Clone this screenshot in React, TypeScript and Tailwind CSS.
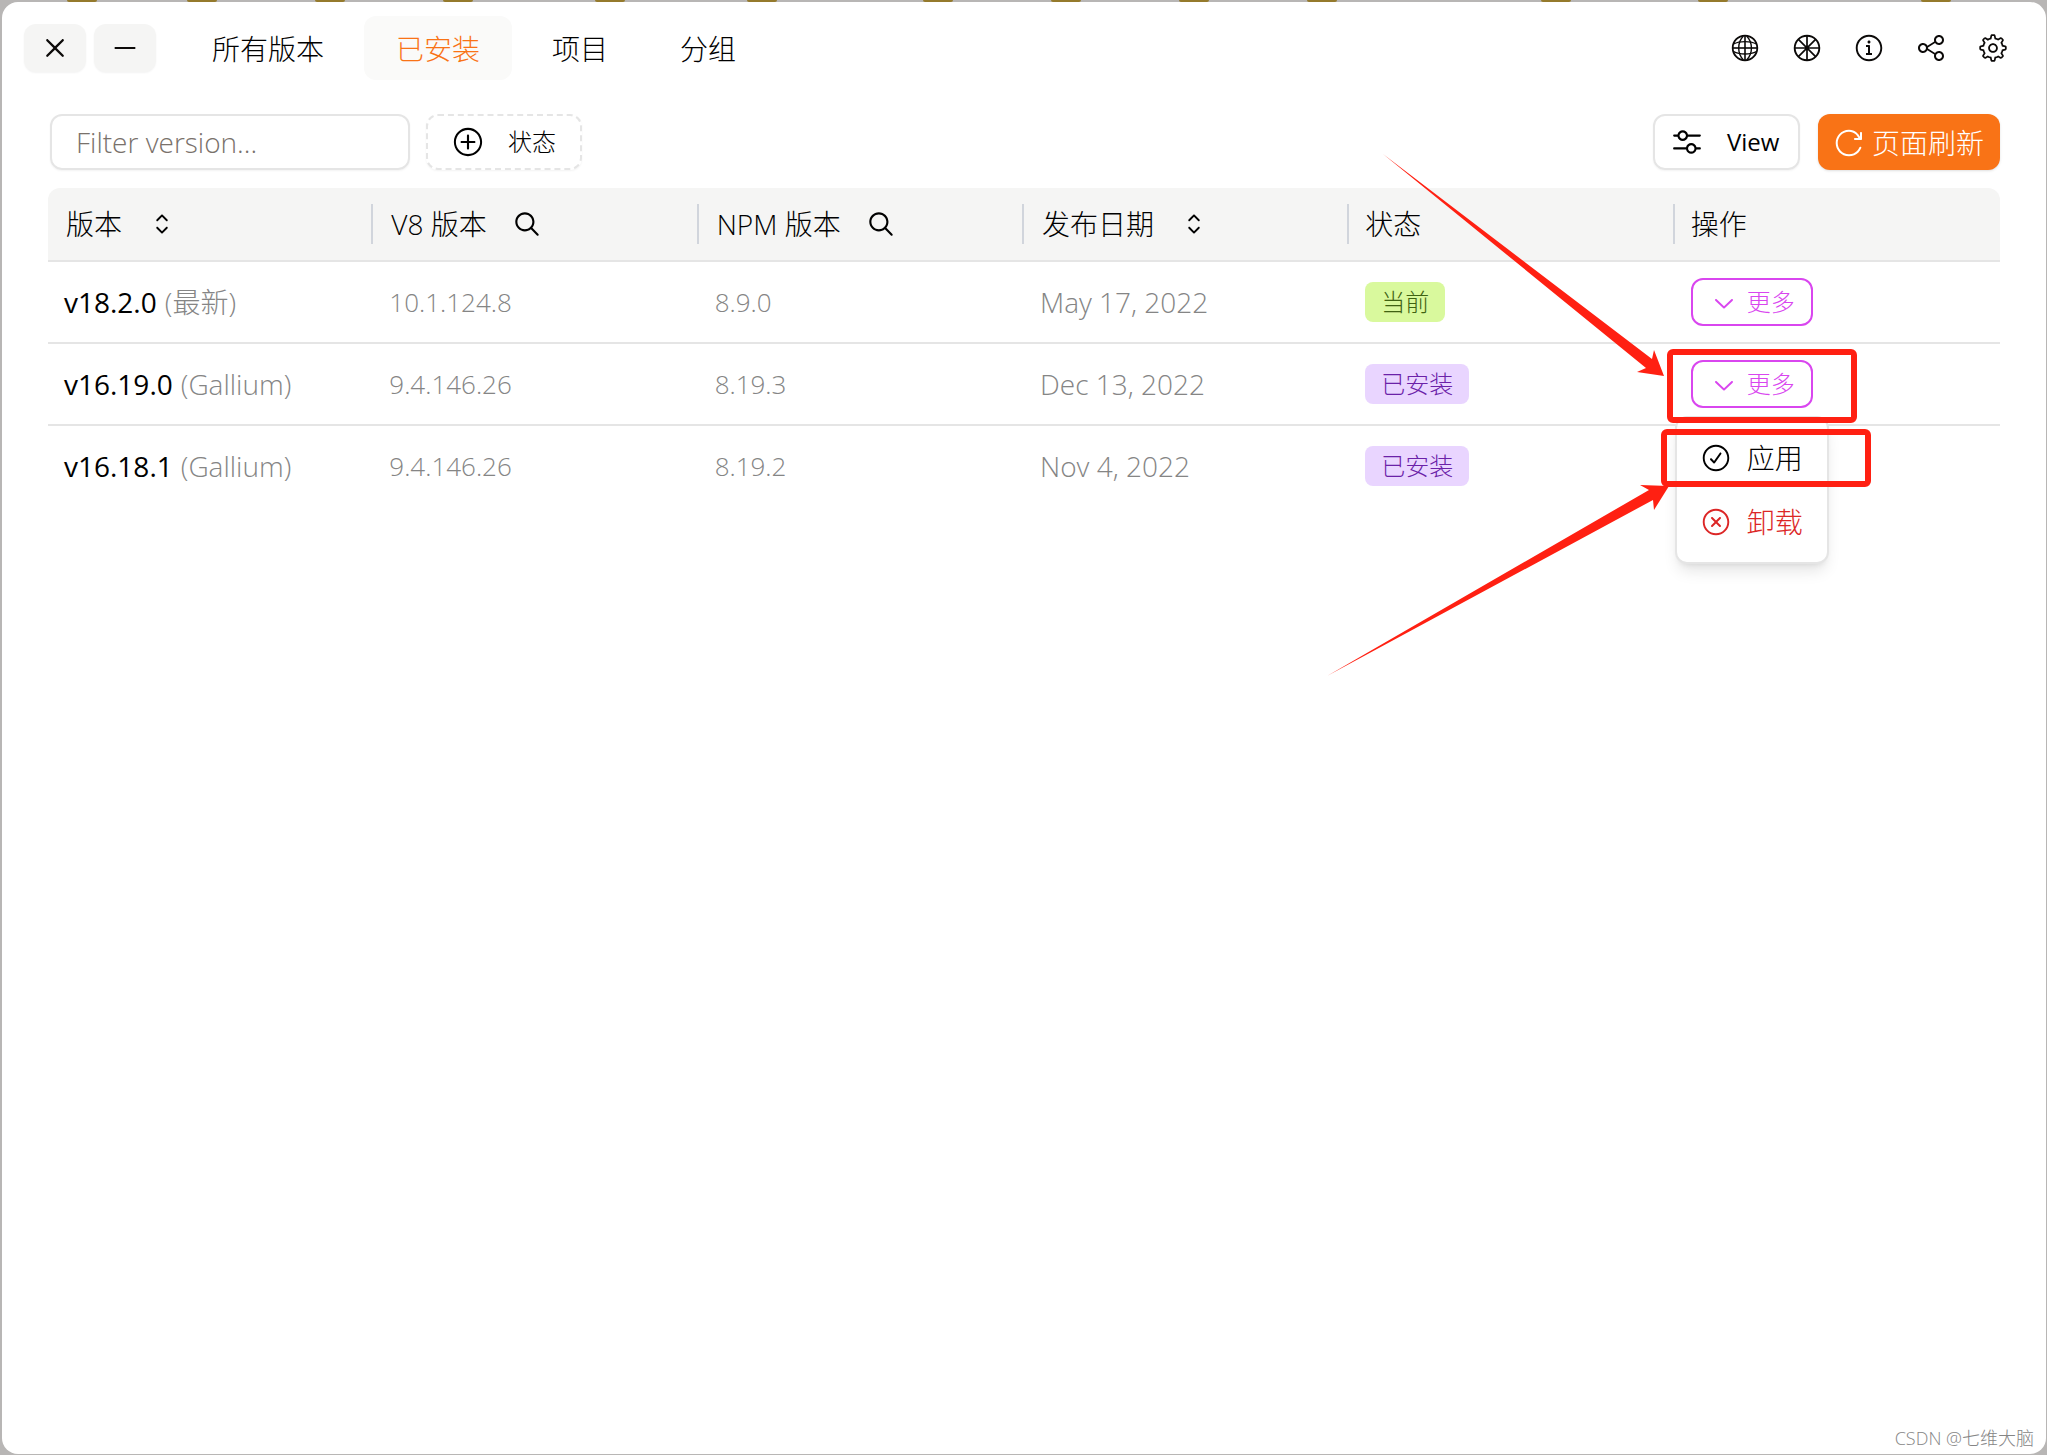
import type { ReactNode } from "react"
import clsx from "clsx"
import {
	RxCaretSort,
	RxCheckCircled,
	RxChevronDown,
	RxCross2,
	RxCrossCircled,
	RxGear,
	RxGlobe,
	RxInfoCircled,
	RxMagnifyingGlass,
	RxMinus,
	RxMixerHorizontal,
	RxPlusCircled,
	RxReload,
	RxShare1,
} from "react-icons/rx"

const tabs = ["所有版本", "已安装", "项目", "分组"]

const versions = [
	{ version: "v18.2.0", tag: "最新", v8: "10.1.124.8", npm: "8.9.0", date: "May 17, 2022", current: true },
	{ version: "v16.19.0", tag: "Gallium", v8: "9.4.146.26", npm: "8.19.3", date: "Dec 13, 2022", current: false },
	{ version: "v16.18.1", tag: "Gallium", v8: "9.4.146.26", npm: "8.19.2", date: "Nov 4, 2022", current: false },
]

// left edges of the folder icons peeking out above the window
const folders = [67, 187, 315, 443, 595, 747, 923, 1051, 1179, 1307, 1541, 1698, 1921]

function WheelIcon() {
	return (
		<svg width="1em" height="1em" viewBox="0 0 15 15" fill="none" stroke="currentColor">
			<circle cx="7.5" cy="7.5" r="6.15" strokeWidth="0.95" />
			<path d="M7.5 1.4v12.2M1.4 7.5h12.2M3.2 3.2l8.6 8.6M11.8 3.2l-8.6 8.6" strokeWidth="0.85" />
			<circle cx="7.5" cy="7.5" r="1.1" fill="currentColor" stroke="none" />
		</svg>
	)
}

function WindowButton({ label, children }: { label: string; children: ReactNode }) {
	return (
		<button aria-label={label} className="flex h-12 w-[62px] items-center justify-center rounded-xl bg-stone-100 text-[30px] text-stone-950 shadow-xs">
			{children}
		</button>
	)
}

function HeaderCell({ title, icon, last }: { title: string; icon?: ReactNode; last?: boolean }) {
	return (
		<th scope="col" className="h-[74px] border-b-2 border-neutral-200 bg-stone-100 p-0 text-left font-light first:rounded-tl-xl last:rounded-tr-xl">
			<div className={clsx("flex h-10 items-center pl-4", !last && "border-r-2 border-gray-300")}>
				{icon ? (
					<button className="flex items-center gap-6 border-2 border-transparent">
						{title}
						<span className="text-[32px]">{icon}</span>
					</button>
				) : title}
			</div>
		</th>
	)
}

function MoreButton({ open }: { open?: boolean }) {
	return (
		<button aria-haspopup="menu" aria-expanded={!!open} className="flex h-12 items-center gap-2 rounded-xl border-2 border-[#d946ef] px-4 text-2xl text-[#d946ef]">
			<RxChevronDown className="text-[30px]" />
			更多
		</button>
	)
}

function ActionMenu() {
	return (
		<div role="menu" className="absolute -left-4 top-14 z-10 w-max rounded-xl border-2 border-neutral-200 bg-white p-2 shadow-lg">
			<button role="menuitem" className="flex h-16 items-center gap-4 px-4 text-black">
				<RxCheckCircled className="text-[30px]" />
				应用
			</button>
			<button role="menuitem" className="flex h-16 items-center gap-4 px-4 text-[#dc2626]">
				<RxCrossCircled className="text-[30px]" />
				卸载
			</button>
		</div>
	)
}

// red frames and arrows, drawn from the corner of the opened action button
function Annotations() {
	return (
		<svg aria-hidden="true" className="pointer-events-none absolute left-0 top-0 z-20 overflow-visible" width="1" height="1">
			<g fill="none" stroke="#ff2012" strokeWidth="6">
				<rect x="-21" y="-8" width="184" height="68" rx="3" />
				<rect x="-27" y="72" width="204" height="52" rx="3" />
			</g>
			<g fill="#ff2012">
				<path d="M-308 -206L-39 -1L-37 -10L-27 16L-54 12L-45 8Z" />
				<path d="M-364 316L-42 130L-51 125L-22 126L-37 150L-38 140Z" />
			</g>
		</svg>
	)
}

export default function App() {
	return (
		<div className="relative flex min-h-screen flex-col bg-[#b8b6b5] pb-px pl-0.5 pr-px pt-0.5 font-['Open_Sans','Noto_Sans_CJK_SC',sans-serif] text-[28px] font-light leading-10 text-black">
			{folders.map(x => (
				<span key={x} className="absolute top-0 h-0.5 w-[30px] rounded-b-sm bg-[#957a2c]" style={{ left: x }} />
			))}
			<div className="relative flex flex-1 flex-col rounded-2xl bg-white">
				<header className="flex items-center gap-6 px-[22px] pt-[14px]">
					<div className="flex gap-2">
						<WindowButton label="关闭"><RxCross2 /></WindowButton>
						<WindowButton label="最小化"><RxMinus /></WindowButton>
					</div>
					<nav className="flex gap-2">
						{tabs.map(tab => (
							<a
								key={tab}
								href="#"
								className={clsx("flex h-16 items-center rounded-xl px-8 pt-0.5", tab === "已安装" && "bg-stone-50 text-[#f97316]")}
							>
								{tab}
							</a>
						))}
					</nav>
					<div className="ml-auto flex gap-8 pr-4 text-[30px] text-stone-950">
						<button aria-label="语言"><RxGlobe /></button>
						<button aria-label="主题"><WheelIcon /></button>
						<button aria-label="关于"><RxInfoCircled /></button>
						<button aria-label="分享"><RxShare1 /></button>
						<button aria-label="设置"><RxGear /></button>
					</div>
				</header>

				<main className="px-[46px] pt-[34px]">
					<div className="flex items-center gap-4 pl-0.5">
						<input
							type="text"
							aria-label="Filter version"
							placeholder="Filter version..."
							className="h-14 w-[360px] rounded-xl border-2 border-neutral-200 px-6 shadow-xs placeholder:text-stone-500"
						/>
						<button className="flex h-14 items-center gap-6 rounded-xl border-2 border-dashed border-neutral-200 px-6 text-2xl shadow-xs">
							<RxPlusCircled className="text-[32px]" />
							状态
						</button>
						<button className="ml-auto flex h-14 min-w-[147px] items-center gap-6 rounded-xl border-2 border-neutral-200 px-4 text-2xl font-normal shadow-xs">
							<RxMixerHorizontal className="text-[32px]" />
							View
						</button>
						<button className="ml-0.5 flex h-14 items-center gap-2 rounded-xl bg-[#f97316] px-4 pt-0.5 text-white shadow-sm">
							<RxReload className="text-[30px]" />
							页面刷新
						</button>
					</div>

					<table className="mt-[18px] w-full table-fixed border-separate border-spacing-0">
						<thead>
							<tr>
								<HeaderCell title="版本" icon={<RxCaretSort />} />
								<HeaderCell title="V8 版本" icon={<RxMagnifyingGlass />} />
								<HeaderCell title="NPM 版本" icon={<RxMagnifyingGlass />} />
								<HeaderCell title="发布日期" icon={<RxCaretSort />} />
								<HeaderCell title="状态" />
								<HeaderCell title="操作" last />
							</tr>
						</thead>
						<tbody className="text-[#858585] [&>tr:not(:last-child)>td]:h-[82px] [&>tr:not(:last-child)>td]:border-b-2 [&_td]:h-20 [&_td]:border-neutral-200 [&_td]:px-4 [&_td]:py-0">
							{versions.map((row, i) => (
								<tr key={row.version}>
									<td>
										<div className="flex gap-2">
											<span className="font-normal text-black">{row.version}</span>
											<span>({row.tag})</span>
										</div>
									</td>
									<td className="text-[26px]">{row.v8}</td>
									<td className="text-[26px]">{row.npm}</td>
									<td>{row.date}</td>
									<td>
										<span className={clsx("flex h-10 w-fit items-center rounded-lg px-4 text-2xl", row.current ? "bg-[#d9f99d] text-[#3f6212]" : "bg-[#e9d5ff] text-[#6b21a8]")}>
											{row.current ? "当前" : "已安装"}
										</span>
									</td>
									<td>
										{i < 2 && (
											<div className="relative w-fit">
												<MoreButton open={i === 1} />
												{i === 1 && <ActionMenu />}
												{i === 1 && <Annotations />}
											</div>
										)}
									</td>
								</tr>
							))}
						</tbody>
					</table>
				</main>
				<div className="absolute bottom-0.5 right-3 text-lg leading-7 text-[#858585]">CSDN @七维大脑</div>
			</div>
		</div>
	)
}
